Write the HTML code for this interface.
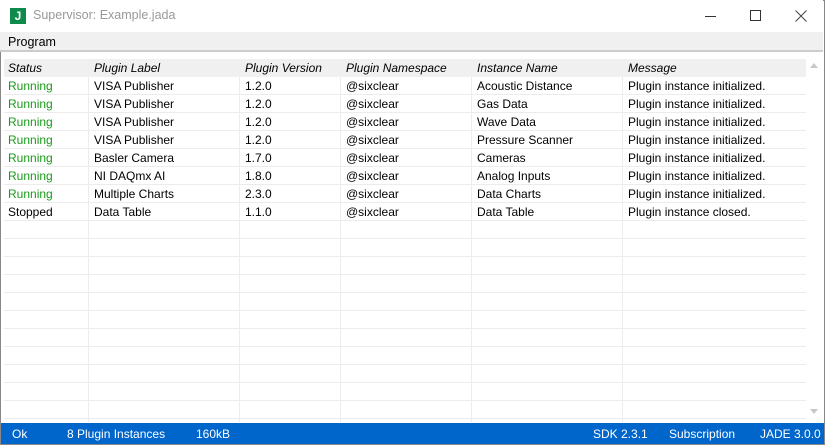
<!DOCTYPE html><html><head><style>
*{margin:0;padding:0;box-sizing:border-box}
body{width:825px;height:445px;overflow:hidden;background:#fff;font-family:"Liberation Sans",sans-serif;font-size:12px;position:relative}
.win{position:absolute;left:0;top:0;width:825px;height:445px;border:1px solid #888}
.title{position:absolute;left:0;top:0;width:823px;height:32px;background:#fff}
.logo{position:absolute;left:10px;top:8px;width:16px;height:16px;background:#0e8a4b;color:#fff;font-weight:bold;font-size:12px;line-height:16px;text-align:center}
.tt{position:absolute;left:33px;top:8px;color:#999;font-size:12.5px}
.menu{position:absolute;left:0;top:32px;width:823px;height:20px;background:#f0f0f0;border-bottom:2px solid #ccc}
.menu span{position:absolute;left:8px;top:3px;font-size:12.5px}
.tbl{position:absolute;left:4px;top:59px;width:802px}
.row{position:absolute;left:0;width:802px;height:18px;border-bottom:1px solid #ececec}
.hd{background:#f0f0f0;font-style:italic;border-bottom:none}
.c{position:absolute;top:2px;white-space:nowrap}
.vl{position:absolute;top:77px;height:345px;width:1px;background:#ececec}
.g{color:#1a9a1a}
.sb{position:absolute;left:806px;top:59px;width:16px;height:363px;background:#fff}
.status{position:absolute;left:1px;top:423px;width:823px;height:21px;background:#0066cc;color:#fff;font-size:12px}
.status span{position:absolute;top:4px}
</style></head><body><div class="win"></div>
<div class="title"><div class="logo">J</div><div class="tt">Supervisor: Example.jada</div>
<div style="position:absolute;left:705px;top:16px;width:11px;height:1px;background:#333"></div>
<div style="position:absolute;left:750px;top:10px;width:11px;height:11px;border:1px solid #333"></div>
<svg style="position:absolute;left:795px;top:10px" width="12" height="12"><path d="M0.5 0.5L11.5 11.5M11.5 0.5L0.5 11.5" stroke="#444" stroke-width="1"/></svg></div>
<div class="menu"><span>Program</span></div>
<div style="position:absolute;left:1px;top:54px;width:823px;height:5px;background:#fff"></div>
<div class="vl" style="left:88px"></div><div class="vl" style="left:239px"></div><div class="vl" style="left:340px"></div><div class="vl" style="left:471px"></div><div class="vl" style="left:622px"></div>
<div class="tbl">
<div class="row hd" style="top:0;width:802px"><span class="c" style="left:4px">Status</span><span class="c" style="left:90px">Plugin Label</span><span class="c" style="left:241px">Plugin Version</span><span class="c" style="left:342px">Plugin Namespace</span><span class="c" style="left:473px">Instance Name</span><span class="c" style="left:624px">Message</span></div>
</div>
<div class="tbl" id="b"></div>
<div class="sb"><div style="position:absolute;left:4px;top:4px;border:4px solid transparent;border-bottom:5px solid #c8c8c8;border-top:0"></div><div style="position:absolute;left:4px;top:350px;border:4px solid transparent;border-top:5px solid #c8c8c8;border-bottom:0"></div></div>
<div class="status"><span style="left:11px">Ok</span><span style="left:66px">8 Plugin Instances</span><span style="left:195px">160kB</span><span style="left:592px">SDK 2.3.1</span><span style="left:668px">Subscription</span><span style="left:759px">JADE 3.0.0</span></div>
<script>
var d=[["Running","VISA Publisher","1.2.0","Acoustic Distance","Plugin instance initialized."],["Running","VISA Publisher","1.2.0","Gas Data","Plugin instance initialized."],["Running","VISA Publisher","1.2.0","Wave Data","Plugin instance initialized."],["Running","VISA Publisher","1.2.0","Pressure Scanner","Plugin instance initialized."],["Running","Basler Camera","1.7.0","Cameras","Plugin instance initialized."],["Running","NI DAQmx AI","1.8.0","Analog Inputs","Plugin instance initialized."],["Running","Multiple Charts","2.3.0","Data Charts","Plugin instance initialized."],["Stopped","Data Table","1.1.0","Data Table","Plugin instance closed."]];
var h="";for(var i=0;i<19;i++){var t=18+i*18;var r=d[i];h+='<div class="row" style="top:'+t+'px">';if(r){h+='<span class="c '+(r[0]=="Running"?"g":"")+'" style="left:4px">'+r[0]+'</span><span class="c" style="left:90px">'+r[1]+'</span><span class="c" style="left:241px">'+r[2]+'</span><span class="c" style="left:342px">@sixclear</span><span class="c" style="left:473px">'+r[3]+'</span><span class="c" style="left:624px">'+r[4]+'</span>';}h+='</div>';}
document.getElementById("b").innerHTML=h;
</script></body></html>
